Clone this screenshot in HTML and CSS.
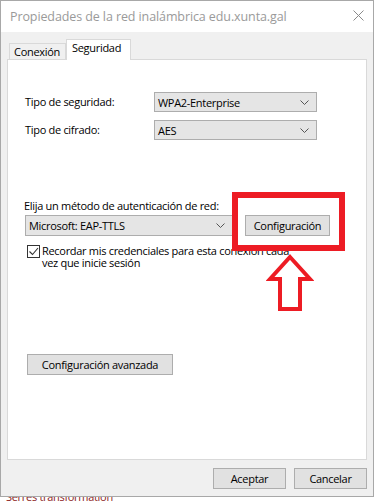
FILE: index.html
```html
<!DOCTYPE html>
<html lang="es">
<head>
<meta charset="utf-8">
<link rel="stylesheet" href="styles.css">
</head>
<body>
<div class="window">
  <div class="titlebar">
    <span class="title">Propiedades de la red inalámbrica edu.xunta.gal</span>
    <svg class="close" width="11" height="11" viewBox="0 0 11 11"><path d="M0.5 0.5 L10.5 10.5 M10.5 0.5 L0.5 10.5" stroke="#8a8a8a" stroke-width="1" fill="none"/></svg>
  </div>
  <div class="body">
    <div class="tabs">
      <div class="tab">Conexión</div>
      <div class="tab active">Seguridad</div>
    </div>
    <div class="panel">
      <div class="grid">
        <span class="label">Tipo de seguridad:</span>
        <div class="select w163"><span>WPA2-Enterprise</span><svg class="chev" width="9" height="5" viewBox="0 0 9 5"><path d="M0.5 0.5 L4.5 4.5 L8.5 0.5" stroke="#555" fill="none"/></svg></div>
        <span class="label">Tipo de cifrado:</span>
        <div class="select w163"><span>AES</span><svg class="chev" width="9" height="5" viewBox="0 0 9 5"><path d="M0.5 0.5 L4.5 4.5 L8.5 0.5" stroke="#555" fill="none"/></svg></div>
      </div>
      <p class="method">Elija un método de autenticación de red:</p>
      <div class="method-row">
        <div class="select w208"><span>Microsoft: EAP-TTLS</span><svg class="chev" width="9" height="5" viewBox="0 0 9 5"><path d="M0.5 0.5 L4.5 4.5 L8.5 0.5" stroke="#555" fill="none"/></svg></div>
        <button class="btn w85">Configuración</button>
      </div>
      <label class="check">
        <span class="box"><svg width="11" height="11" viewBox="0 0 11 11"><path d="M1.5 5.5 L4.5 8.5 L10 2" stroke="#333" stroke-width="1.1" fill="none"/></svg></span>
        <span class="check-text">Recordar mis credenciales para esta conexión cada<br>vez que inicie sesión</span>
      </label>
      <button class="btn advanced">Configuración avanzada</button>
    </div>
    <div class="footer">
      <button class="btn w73">Aceptar</button>
      <button class="btn w73">Cancelar</button>
    </div>
  </div>
  <div class="highlight"></div>
  <svg class="arrow" width="48" height="58" viewBox="0 0 48 58">
    <path d="M24 3 L44 25 L34 25 L34 55 L14 55 L14 25 L4 25 Z" fill="#fff" stroke="#ed1c24" stroke-width="4" stroke-linejoin="miter"/>
  </svg>
</div>
<div class="behind">Serres  transformation</div>
</body>
</html>
```

FILE: styles.css
```css
html, body {
  margin: 0;
  padding: 0;
  background: #ffffff;
  font-family: "Open Sans", "Noto Sans", sans-serif;
  font-size: 11px;
  letter-spacing: -0.3px;
  color: #000;
  overflow: hidden;
}

.window {
  position: relative;
  width: 372px;
  height: 495px;
  border: 1px solid #a8a8a8;
  background: #f0f0f0;
  display: flex;
  flex-direction: column;
}

.titlebar {
  height: 31px;
  background: #fff;
  display: flex;
  align-items: center;
  justify-content: space-between;
  padding: 0 9px 0 9px;
  flex-shrink: 0;
}

.title {
  color: #9a9a9a;
  font-size: 12.5px;
  letter-spacing: -0.1px;
  margin-top: -1px;
}

.close {
  margin-right: 0;
  margin-top: -2px;
}

.body {
  flex: 1;
  display: flex;
  flex-direction: column;
  padding: 7px 6px 0 6px;
}

.tabs {
  display: flex;
  align-items: flex-end;
  padding-left: 2px;
  height: 20px;
  position: relative;
  z-index: 1;
}

.tab {
  height: 15px;
  line-height: 15px;
  padding: 0 4px 0 4px;
  border: 1px solid #d9d9d9;
  border-bottom: none;
  background: #f0f0f0;
  width: 47px;
}

.tab.active {
  height: 20px;
  line-height: 15px;
  background: #fff;
  width: 54px;
  margin-bottom: -1px;
  padding-left: 5px;
}

.panel {
  height: 401px;
  background: #fff;
  border: 1px solid #d9d9d9;
  padding: 32px 0 0 17px;
  box-sizing: border-box;
}

.grid {
  display: grid;
  grid-template-columns: 129px 163px;
  row-gap: 8px;
  align-items: center;
}

.label {
  line-height: 20px;
}

.select {
  height: 20px;
  box-sizing: border-box;
  border: 1px solid #adadad;
  background: #e5e5e5;
  display: flex;
  align-items: center;
  justify-content: space-between;
  padding: 0 4px 0 3px;
}

.chev {
  margin-right: 3px;
}

.w163 { width: 163px; }
.w208 { width: 208px; height: 21px; }

.method {
  margin: 58px 0 0 -1px;
  line-height: 16px;
}

.method-row {
  display: flex;
  gap: 12px;
  margin-top: 1px;
  align-items: center;
}

.btn {
  font-family: inherit;
  font-size: 11px;
  letter-spacing: -0.3px;
  height: 21px;
  box-sizing: border-box;
  border: 1px solid #adadad;
  background: #e1e1e1;
  padding: 0;
  color: #000;
  line-height: 18px;
}

.w85 { width: 85px; }
.w73 { width: 73px; }

.check {
  display: flex;
  align-items: flex-start;
  margin-top: 9px;
  margin-left: 2px;
}

.box {
  width: 13px;
  height: 13px;
  box-sizing: border-box;
  border: 1px solid #333;
  background: #fff;
  display: flex;
  align-items: center;
  justify-content: center;
  flex-shrink: 0;
}

.check-text {
  margin-left: 2px;
  line-height: 12px;
  margin-top: 0px;
}

.advanced {
  display: block;
  width: 146px;
  margin: 85px 0 0 2px;
}

.footer {
  display: flex;
  justify-content: flex-end;
  gap: 8px;
  padding: 8px 0 0 0;
}

.highlight {
  position: absolute;
  left: 231px;
  top: 191px;
  width: 113px;
  height: 59px;
  box-sizing: border-box;
  border: 6px solid #ed1c24;
}

.arrow {
  position: absolute;
  left: 265px;
  top: 253px;
}

.behind {
  color: #8b1a1a;
  font-size: 11px;
  margin: -6px 0 0 6px;
  line-height: 12px;
}
```
